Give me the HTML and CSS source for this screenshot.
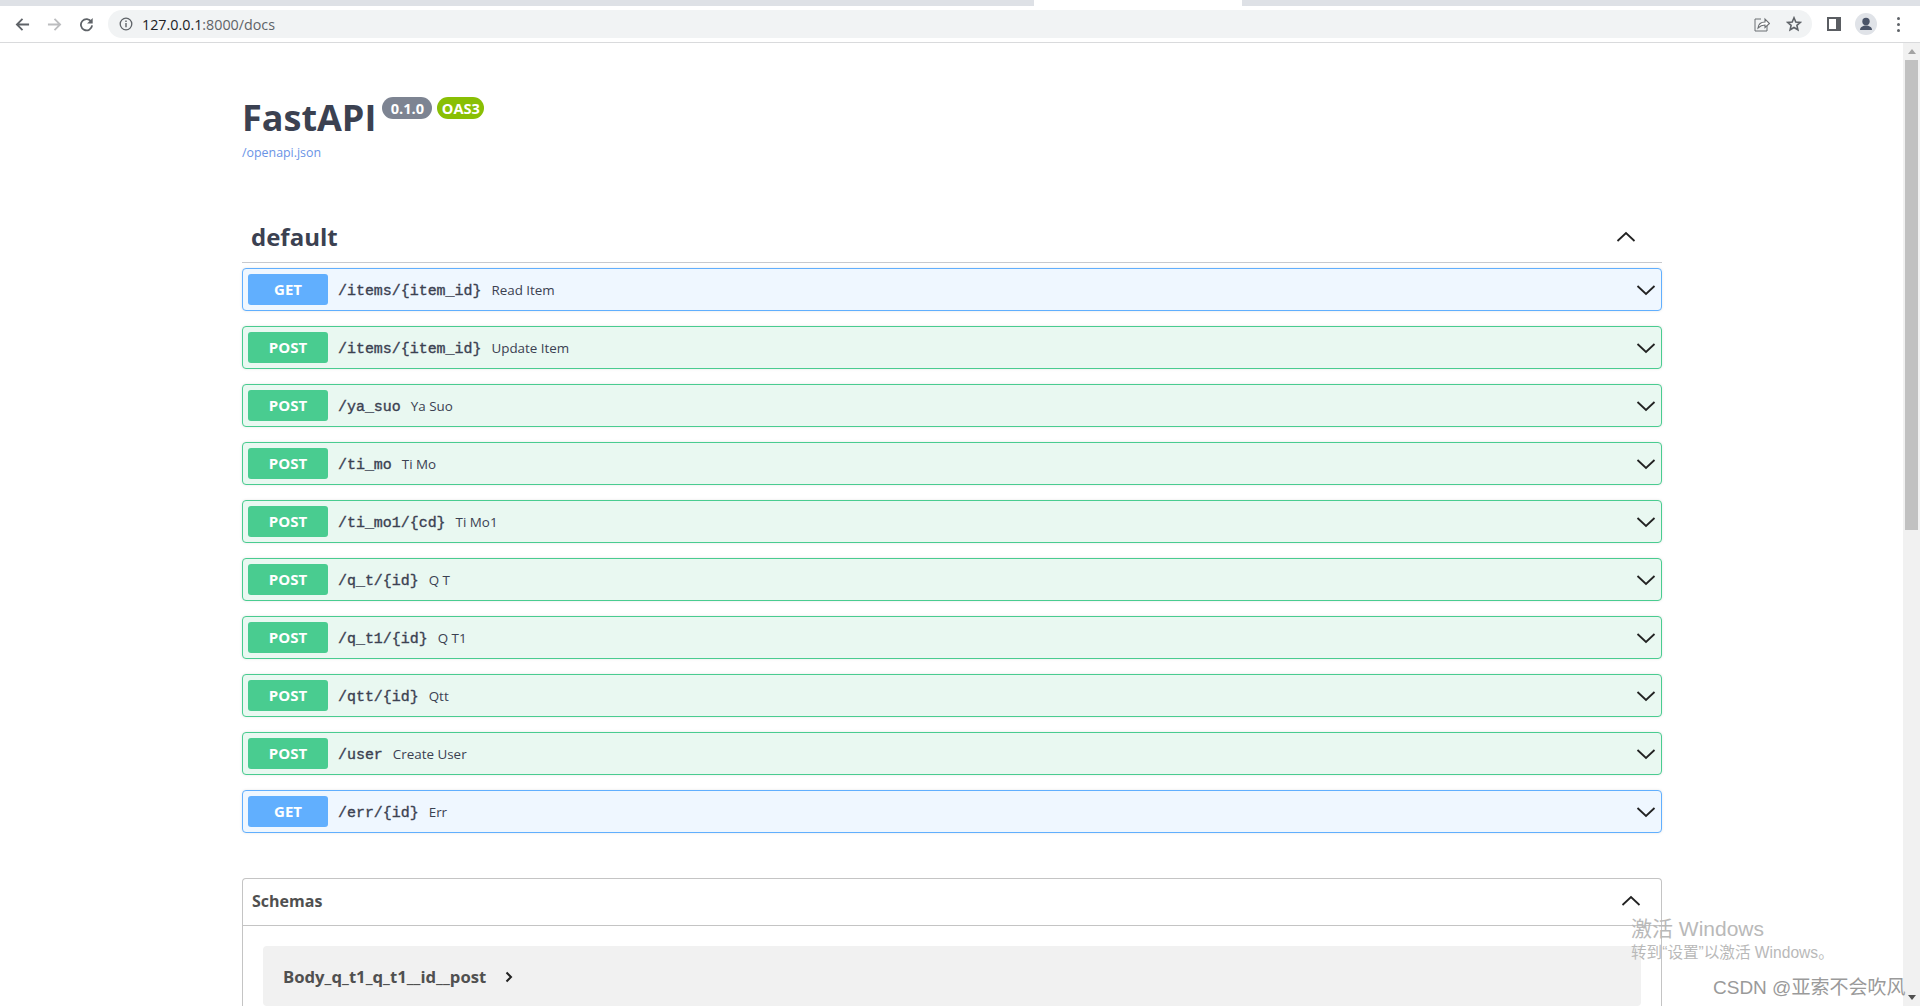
FILE: index.html
```html
<!DOCTYPE html>
<html lang="en">
<head>
<meta charset="utf-8">
<title>FastAPI - Swagger UI</title>
<link rel="stylesheet" href="styles.css">
</head>
<body>
<svg class="sprites" width="0" height="0" aria-hidden="true">
  <symbol id="down" viewBox="0 0 20 12"><path d="M1.5 2 L10 10 L18.5 2" fill="none" stroke="#222" stroke-width="1.8"/></symbol>
  <symbol id="up" viewBox="0 0 20 12"><path d="M1.5 10 L10 2 L18.5 10" fill="none" stroke="#222" stroke-width="1.8"/></symbol>
</svg>
<header class="chrome">
  <div class="tabstrip">
    <div class="tab tab-left"></div>
    <div class="tab-active"></div>
    <div class="tab tab-right"></div>
  </div>
  <div class="toolbar">
    <svg class="nav-icon" viewBox="0 0 16 16"><path d="M15 8H2.5M8 2 2 8l6 6" fill="none" stroke="#5f6368" stroke-width="1.9"/></svg>
    <svg class="nav-icon" viewBox="0 0 16 16"><path d="M1 8h12.5M8 2l6 6-6 6" fill="none" stroke="#bcbdbf" stroke-width="1.9"/></svg>
    <svg class="nav-icon" viewBox="0 0 16 16"><path d="M13.2 5.2A6 6 0 1 0 14 9" fill="none" stroke="#5f6368" stroke-width="1.9"/><path d="M14.6 1v6h-6z" fill="#5f6368"/></svg>
    <div class="omnibox">
      <svg class="info" viewBox="0 0 14 14"><circle cx="7" cy="7" r="5.8" fill="none" stroke="#5f6368" stroke-width="1.3"/><path d="M7 6v4.2M7 3.6v1.3" stroke="#5f6368" stroke-width="1.4"/></svg>
      <span class="url"><b>127.0.0.1</b>:8000/docs</span>
      <span class="omni-space"></span>
      <svg class="share" viewBox="0 0 16 16"><path d="M7 3H1v12h12V9" fill="none" stroke="#6b6e72" stroke-width="1"/><path d="M4 12c.5-4 3.500-6 7-6V3l4.500 4.500L11 11.500V9c-3 0-5 1-7 3z" fill="#fff" stroke="#6b6e72" stroke-width="1.100"/></svg>
      <svg class="star" viewBox="0 0 16 16"><path d="M8 1.800l1.800 4.200 4.500.4-3.400 3 1 4.400L8 11.500 4.100 13.800l1-4.400-3.400-3 4.500-.4z" fill="none" stroke="#5f6368" stroke-width="1.600"/></svg>
    </div>
    <div class="panel-icon"><span></span></div>
    <div class="avatar"><svg viewBox="0 0 22 22"><circle cx="11" cy="8.500" r="3.700" fill="#4a5468"/><path d="M5 17c0-3 3-4.500 6-4.500s6 1.500 6 4.500z" fill="#4a5468"/></svg></div>
    <div class="kebab"><i></i><i></i><i></i></div>
  </div>
</header>

<div class="viewport">
  <main class="page">
    <section class="info-block">
      <div class="title-row">
        <h1 class="title">FastAPI</h1>
        <span class="badge badge-version">0.1.0</span>
        <span class="badge badge-oas">OAS3</span>
      </div>
      <a class="spec-link" href="#">/openapi.json</a>
    </section>

    <section class="tag">
      <div class="tag-head">
        <h3 class="tag-name">default</h3>
        <svg class="tag-chevron"><use href="#up"/></svg>
      </div>
      <div class="op op-get"><span class="method">GET</span><span class="path">/items/{item_id}</span><span class="summary">Read Item</span><svg class="op-chevron"><use href="#down"/></svg></div>
      <div class="op op-post"><span class="method">POST</span><span class="path">/items/{item_id}</span><span class="summary">Update Item</span><svg class="op-chevron"><use href="#down"/></svg></div>
      <div class="op op-post"><span class="method">POST</span><span class="path">/ya_suo</span><span class="summary">Ya Suo</span><svg class="op-chevron"><use href="#down"/></svg></div>
      <div class="op op-post"><span class="method">POST</span><span class="path">/ti_mo</span><span class="summary">Ti Mo</span><svg class="op-chevron"><use href="#down"/></svg></div>
      <div class="op op-post"><span class="method">POST</span><span class="path">/ti_mo1/{cd}</span><span class="summary">Ti Mo1</span><svg class="op-chevron"><use href="#down"/></svg></div>
      <div class="op op-post"><span class="method">POST</span><span class="path">/q_t/{id}</span><span class="summary">Q T</span><svg class="op-chevron"><use href="#down"/></svg></div>
      <div class="op op-post"><span class="method">POST</span><span class="path">/q_t1/{id}</span><span class="summary">Q T1</span><svg class="op-chevron"><use href="#down"/></svg></div>
      <div class="op op-post"><span class="method">POST</span><span class="path">/qtt/{id}</span><span class="summary">Qtt</span><svg class="op-chevron"><use href="#down"/></svg></div>
      <div class="op op-post"><span class="method">POST</span><span class="path">/user</span><span class="summary">Create User</span><svg class="op-chevron"><use href="#down"/></svg></div>
      <div class="op op-get"><span class="method">GET</span><span class="path">/err/{id}</span><span class="summary">Err</span><svg class="op-chevron"><use href="#down"/></svg></div>
    </section>

    <section class="schemas">
      <div class="schemas-head">
        <h4 class="schemas-title">Schemas</h4>
        <svg class="schemas-chevron"><use href="#up"/></svg>
      </div>
      <div class="schemas-body">
        <div class="model">
          <span class="model-name">Body_q_t1_q_t1__id__post</span>
          <svg class="model-arrow" viewBox="0 0 8 12"><path d="M1.500 1.500 6 6l-4.500 4.500" fill="none" stroke="#222" stroke-width="2"/></svg>
        </div>
      </div>
    </section>
  </main>
  <div class="scrollbar">
    <span class="arrow-up"></span>
    <div class="thumb"></div>
    <span class="track-space"></span>
    <span class="arrow-down"></span>
  </div>
</div>

<div class="activate">
  <div class="activate-title">激活 Windows</div>
  <div class="activate-sub">转到“设置”以激活 Windows。</div>
</div>
<div class="csdn">CSDN @亚索不会吹风</div>
</body>
</html>
```
FILE: styles.css
```css
* { box-sizing: border-box; }
html, body { margin: 0; height: 1006px; overflow: hidden; background: #fff; }
body {
  display: flex;
  flex-direction: column;
  font-family: "Open Sans", "Noto Sans CJK SC", sans-serif;
  color: #3b4151;
}
.sprites { position: absolute; }

/* browser chrome */
.chrome { flex: none; height: 43px; border-bottom: 1px solid #d9dadc; }
.tabstrip { display: flex; height: 6px; background: #dee1e6; }
.tab { background: #dee1e6; }
.tab-left { width: 1034px; border-bottom-right-radius: 6px; }
.tab-active { width: 208px; background: #fff; }
.tab-right { flex: 1; border-bottom-left-radius: 6px; }
.toolbar { display: flex; align-items: center; height: 36px; padding-left: 15px; }
.nav-icon { width: 15px; height: 15px; margin-right: 17px; flex: none; }
.nav-icon:nth-child(3) { margin-right: 14px; }
.omnibox {
  display: flex;
  align-items: center;
  width: 1704px;
  height: 28px;
  border-radius: 14px;
  background: #f1f3f4;
  padding: 0 0 0 11px;
  flex: none;
}
.info { width: 14px; height: 14px; flex: none; }
.url { margin-left: 9px; font: 14.3px "Open Sans", sans-serif; color: #5f6368; }
.url b { font-weight: 400; color: #202124; }
.omni-space { flex: 1; }
.share { width: 16px; height: 16px; margin-right: 16px; }
.star { width: 16px; height: 16px; margin-right: 10px; }
.panel-icon {
  width: 14px;
  height: 14px;
  margin-left: 15px;
  background: #5a5d62;
  padding: 2px 5px 2px 2px;
  flex: none;
}
.panel-icon span { display: block; height: 100%; background: #fff; }
.avatar { width: 22px; height: 22px; margin-left: 14px; border-radius: 50%; background: #e0e3e8; flex: none; }
.avatar svg { display: block; width: 22px; height: 22px; }
.kebab { display: flex; flex-direction: column; gap: 3px; margin-left: 20px; flex: none; }
.kebab i { display: block; width: 3px; height: 3px; border-radius: 50%; background: #5f6368; }

/* viewport */
.viewport { flex: 1; display: flex; min-height: 0; }
.page { flex: 1; min-width: 0; overflow: hidden; padding: 0 241px 0 242px; }
.scrollbar {
  flex: none;
  width: 17px;
  background: #f1f1f1;
  display: flex;
  flex-direction: column;
  align-items: center;
}
.arrow-up { margin-top: 6px; width: 0; height: 0; border: 4px solid transparent; border-top: 0; border-bottom: 5px solid #a3a3a3; }
.thumb { margin-top: 6px; width: 13px; height: 470px; background: #c1c1c1; }
.track-space { flex: 1; }
.arrow-down { margin-bottom: 6px; width: 0; height: 0; border: 4px solid transparent; border-bottom: 0; border-top: 5px solid #505050; }

/* info */
.info-block { padding-top: 52px; height: 169px; }
.title-row { display: flex; align-items: flex-start; height: 50px; }
.title { margin: -2px 0 0; font-size: 36px; font-weight: 700; line-height: 50px; color: #3b4151; }
.badge {
  margin-top: 2px;
  height: 22px;
  border-radius: 11px;
  color: #fff;
  font-size: 14.6px;
  font-weight: 700;
  line-height: 22px;
  text-align: center;
}
.badge-version { width: 50px; margin-left: 6px; background: #7d8492; }
.badge-oas { width: 47px; margin-left: 5px; background: #89bf04; }
.spec-link { display: block; font-size: 12.4px; line-height: 16px; color: #6a93e6; text-decoration: none; }

/* tag */
.tag-head {
  display: flex;
  align-items: center;
  justify-content: space-between;
  height: 51px;
  border-bottom: 1px solid #c7c9ce;
  padding: 0 26px 0 9px;
  margin-bottom: 5px;
}
.tag-name { margin: 0; font-size: 24px; font-weight: 700; line-height: 32px; color: #3b4151; }
.tag-chevron { width: 20px; height: 12px; }
.op {
  display: flex;
  align-items: center;
  height: 43px;
  margin-bottom: 15px;
  padding: 0 5px;
  border: 1px solid;
  border-radius: 4px;
  box-shadow: 0 0 3px rgba(0,0,0,.1);
}
.op-get { border-color: #61affe; background: #eff7ff; }
.op-post { border-color: #49cc90; background: #e9f8f1; }
.method {
  width: 80px;
  height: 31px;
  border-radius: 3px;
  color: #fff;
  font-size: 15px;
  font-weight: 700;
  line-height: 30px;
  text-align: center;
  flex: none;
}
.op-get .method { background: #61affe; }
.op-post .method { background: #49cc90; }
.path {
  margin-left: 10px;
  font-family: "Liberation Mono", monospace;
  font-size: 14.95px;
  font-weight: 400;
  -webkit-text-stroke: .35px #3b4151;
  color: #3b4151;
  position: relative;
  top: 1px;
}
.summary { margin-left: 10px; font-size: 13.4px; color: #3b4151; }
.op-chevron { width: 20px; height: 12px; margin-left: auto; margin-right: 0; flex: none; }

/* schemas */
.schemas { margin-top: 45px; border: 1px solid #c4c4c4; border-bottom: 0; border-radius: 4px 4px 0 0; }
.schemas-head {
  display: flex;
  align-items: center;
  justify-content: space-between;
  height: 47px;
  padding: 0 20px 3px 9px;
  border-bottom: 1px solid #c4c4c4;
}
.schemas-title { margin: 0; font-size: 16px; font-weight: 700; color: #505050; }
.schemas-chevron { width: 20px; height: 12px; }
.schemas-body { padding: 20px 20px 0; }
.model {
  display: flex;
  align-items: center;
  height: 60px;
  padding: 0 20px;
  border-radius: 4px;
  background: #f1f1f1;
}
.model-name { font-size: 16.7px; font-weight: 700; color: #505050; }
.model-arrow { width: 8px; height: 12px; margin-left: 19px; margin-top: 2px; }

/* overlays */
.activate { position: absolute; left: 1631px; top: 915px; color: #b9b9b9; font-family: "Liberation Sans", "Noto Sans CJK SC", sans-serif; }
.activate-title { font-size: 21px; line-height: 28px; }
.activate-sub { font-size: 15.6px; line-height: 20px; }
.csdn { position: absolute; left: 1713px; top: 974px; font: 19px/28px "Liberation Sans", "Noto Sans CJK SC", sans-serif; color: #9a9a9a; }
```
